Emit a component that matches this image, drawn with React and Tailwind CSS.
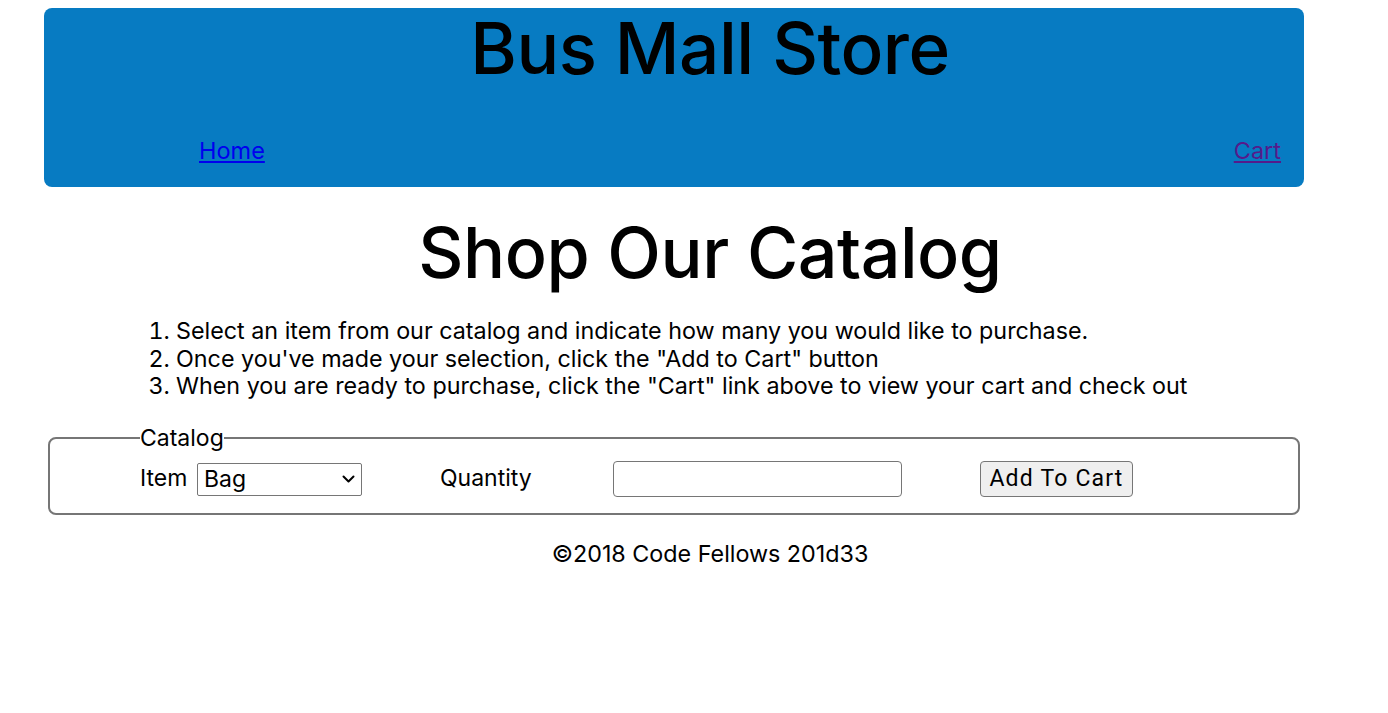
export default function App() {
  return (
    <div className="min-h-[713px] bg-white text-black" style={{ fontFamily: "Inter, 'Noto Sans', sans-serif" }}>
      <header className="mx-[44px] mt-2 flex h-[179px] w-[1260px] flex-col rounded-lg bg-[#077bc2] pl-[72px]">
        <h1 className="mt-0 text-center text-[71px] font-medium leading-[80px] tracking-[-0.5px]">
          Bus Mall Store
        </h1>
        <nav className="mt-[51px] flex justify-between pl-[83px] pr-[23px] text-[23.5px] leading-6">
          <a href="#" className="text-[#0000ee] underline">Home</a>
          <a href="#" className="text-[#551a8b] underline">Cart</a>
        </nav>
      </header>

      <main className="ml-[44px] w-[1260px] pl-[72px]">
        <h2 className="mt-[26px] text-center text-[70px] font-medium leading-[80px] tracking-[-0.5px]">
          Shop Our Catalog
        </h2>
        <ol className="mt-[24px] ml-[28px] list-decimal pl-[32px] text-[23.3px] leading-[27.5px]">
          <li>Select an item from our catalog and indicate how many you would like to purchase.</li>
          <li>Once you've made your selection, click the "Add to Cart" button</li>
          <li>When you are ready to purchase, click the "Cart" link above to view your cart and check out</li>
        </ol>
      </main>

      <form className="ml-[48px] mt-[24px] w-[1252px]">
        <fieldset className="m-0 rounded-lg border-2 border-[#767676] pb-[16px] pl-[90px] pr-4 pt-[9px]">
          <legend className="p-0 text-[23px] leading-[28px]">Catalog</legend>
          <div className="flex h-[36px] items-center text-[23px]">
            <label className="w-[57px]">Item</label>
            <div className="relative h-[33px] w-[165px]">
              <select className="h-full w-full appearance-none rounded-[2px] border border-[#767676] bg-white pl-[6px] text-[23px] leading-[31px]">
                <option>Bag</option>
              </select>
              <svg
                className="pointer-events-none absolute right-[7px] top-[13px]"
                width="13"
                height="8"
                viewBox="0 0 13 8"
                fill="none"
                stroke="black"
                strokeWidth="2"
                strokeLinecap="round"
                strokeLinejoin="round"
              >
                <path d="M1.5 1.5 L6.5 6.5 L11.5 1.5" />
              </svg>
            </div>
            <label className="ml-[78px] w-[173px]">Quantity</label>
            <input className="h-[36px] w-[289px] rounded-sm border border-[#767676]" />
            <button
              type="button"
              className="ml-[78px] h-[36px] w-[153px] rounded-sm border border-[#767676] bg-[#efefef] text-[23px] tracking-[1.2px]"
              style={{ fontFamily: "'Roboto', sans-serif" }}
            >
              Add To Cart
            </button>
          </div>
        </fieldset>
      </form>

      <footer className="mt-[22px] w-[1348px] pl-[72px] text-center text-[23.3px]">
        ©2018 Code Fellows 201d33
      </footer>
    </div>
  );
}
